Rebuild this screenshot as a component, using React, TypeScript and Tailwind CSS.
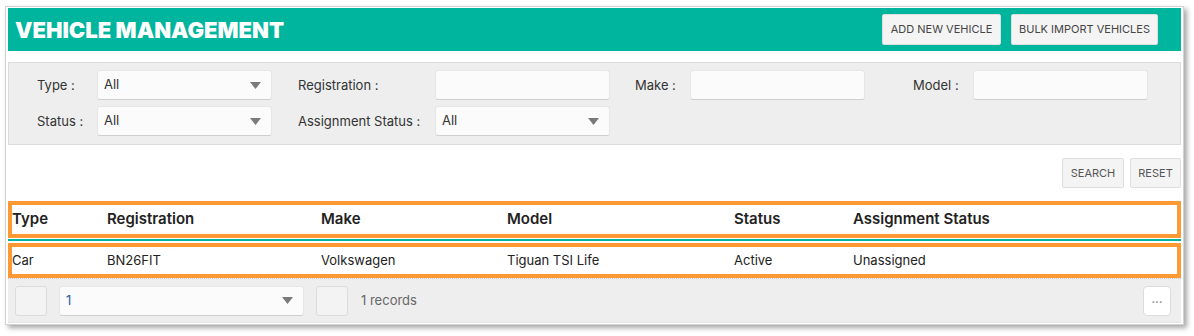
import React from "react";

const Arrow = () => (
  <svg width="11" height="7" viewBox="0 0 11 7" className="shrink-0">
    <path d="M0 0 L11 0 L5.5 7 Z" fill="#7a7a7a" />
  </svg>
);

const Select = ({ w, value, blue }: { w: string; value: string; blue?: boolean }) => (
  <div
    className={`${w} h-[30px] bg-[#fbfbfb] border border-[#e6e6e6] border-b-[#cfcfcf] rounded-[3px] flex items-center justify-between pl-[6px] pr-[10px]`}
  >
    <span className={`text-[13px] ${blue ? "text-[#1f5ea8]" : "text-[#333]"}`}>{value}</span>
    <Arrow />
  </div>
);

const Input = () => (
  <div className="w-[175px] h-[30px] bg-[#fbfbfb] border border-[#e6e6e6] border-b-[#cfcfcf] rounded-[3px]" />
);

const Label = ({ children, w }: { children: React.ReactNode; w: string }) => (
  <div className={`${w} text-[13px] text-[#333] leading-none`}>{children}</div>
);

const cols = [
  { h: "Type", v: "Car" },
  { h: "Registration", v: "BN26FIT" },
  { h: "Make", v: "Volkswagen" },
  { h: "Model", v: "Tiguan TSI Life" },
  { h: "Status", v: "Active" },
  { h: "Assignment Status", v: "Unassigned" },
];

export default function App() {
  return (
    <div
      className="w-[1194px] h-[336px] bg-white pt-[6px] pl-[5px]"
      style={{ fontFamily: "Inter, 'Noto Sans', sans-serif" }}
    >
      <div className="w-[1179px] h-[319px] bg-white border border-[#d2d2d2] shadow-[3px_3px_5px_rgba(0,0,0,0.35)] pt-[1px] px-[2px] flex flex-col">
        {/* Header */}
        <div className="h-[43px] bg-[#00b59d] flex items-center justify-between pl-[7px] pr-[23px] shrink-0">
          <div className="text-white text-[22px] font-black tracking-[0px] leading-none">
            VEHICLE MANAGEMENT
          </div>
          <div className="flex gap-[10px]">
            <div className="h-[31px] w-[119px] bg-[#f4f4f4] border border-[#dedede] rounded-[2px] flex items-center justify-center text-[11px] text-[#444]">
              ADD NEW VEHICLE
            </div>
            <div className="h-[31px] w-[147px] bg-[#f4f4f4] border border-[#dedede] rounded-[2px] flex items-center justify-center text-[11px] text-[#444]">
              BULK IMPORT VEHICLES
            </div>
          </div>
        </div>

        {/* Filters */}
        <div className="mt-[11px] h-[83px] bg-[#eeeeee] border border-[#dcdcdc] pl-[28px] pt-[7px] flex flex-col gap-[6px] shrink-0">
          <div className="flex items-center">
            <Label w="w-[60px]">Type :</Label>
            <Select w="w-[175px]" value="All" />
            <div className="w-[26px]" />
            <Label w="w-[137px]">Registration :</Label>
            <Input />
            <div className="w-[25px]" />
            <Label w="w-[55px]">Make :</Label>
            <Input />
            <div className="w-[48px]" />
            <Label w="w-[60px]">Model :</Label>
            <Input />
          </div>
          <div className="flex items-center">
            <Label w="w-[60px]">Status :</Label>
            <Select w="w-[175px]" value="All" />
            <div className="w-[26px]" />
            <Label w="w-[137px]">Assignment Status :</Label>
            <Select w="w-[175px]" value="All" />
          </div>
        </div>

        {/* Search / Reset */}
        <div className="flex justify-end gap-[6px] mt-[13px] shrink-0">
          <div className="h-[30px] w-[62px] bg-[#f4f4f4] border border-[#dedede] rounded-[2px] flex items-center justify-center text-[11px] text-[#555]">
            SEARCH
          </div>
          <div className="h-[30px] w-[51px] bg-[#f4f4f4] border border-[#dedede] rounded-[2px] flex items-center justify-center text-[11px] text-[#555]">
            RESET
          </div>
        </div>

        {/* Table header */}
        <div className="mt-[13px] h-[37px] border-4 border-[#ff9933] grid grid-cols-[95px_214px_186px_227px_119px_1fr] items-center shrink-0">
          {cols.map((c) => (
            <div key={c.h} className="text-[15px] font-semibold text-[#222]">
              {c.h}
            </div>
          ))}
        </div>
        <div className="mt-[1px] h-[2px] bg-[#00b59d] shrink-0" />
        {/* Row */}
        <div className="mt-[2px] h-[35px] border-4 border-[#ff9933] grid grid-cols-[95px_214px_186px_227px_119px_1fr] items-center shrink-0">
          {cols.map((c) => (
            <div key={c.h} className="text-[13px] text-[#222]">
              {c.v}
            </div>
          ))}
        </div>

        {/* Footer */}
        <div className="h-[45px] border-t border-dotted border-[#c8c8c8] bg-[#eeeeee] border-b border-b-[#dcdcdc] flex items-center pl-[7px] pr-[10px] shrink-0">
          <div className="w-[32px] h-[30px] bg-[#f3f3f3] border border-[#dcdcdc] rounded-[3px]" />
          <div className="ml-[12px]">
            <Select w="w-[245px]" value="1" blue />
          </div>
          <div className="ml-[12px] w-[32px] h-[30px] bg-[#f3f3f3] border border-[#dcdcdc] rounded-[3px]" />
          <div className="ml-[13px] text-[13px] text-[#666]">1 records</div>
          <div className="ml-auto w-[28px] h-[30px] bg-white border border-[#dcdcdc] rounded-[4px] flex items-center justify-center text-[13px] text-[#888] pb-[4px]">
            ...
          </div>
        </div>
      </div>
    </div>
  );
}
